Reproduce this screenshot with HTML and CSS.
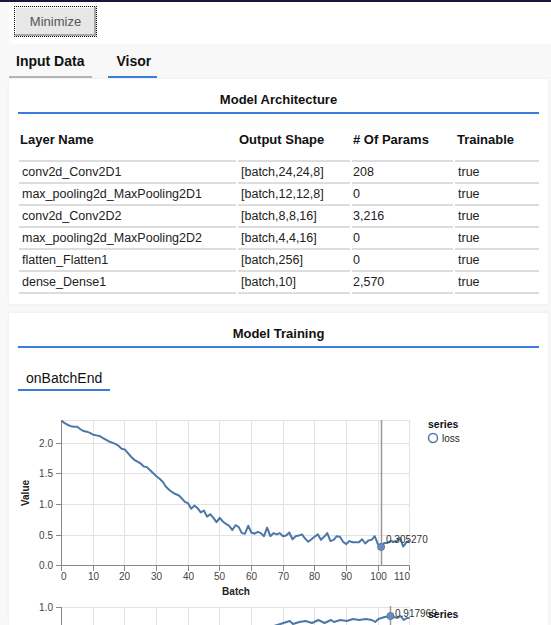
FILE: index.html
```html
<!DOCTYPE html>
<html>
<head>
<meta charset="utf-8">
<link rel="stylesheet" href="styles.css">
</head>
<body>
<div class="topbar"></div>
<div class="header"><button class="min-btn">Minimize</button></div>
<div class="tabs">
  <div class="tab tab-input">Input Data</div>
  <div class="tab tab-visor active">Visor</div>
</div>

<div class="card">
  <div class="card-title">Model Architecture</div>
  <table class="arch">
    <colgroup>
      <col class="c1"><col class="c2"><col class="c3"><col class="c4">
    </colgroup>
    <thead>
      <tr><th>Layer Name</th><th>Output Shape</th><th># Of Params</th><th class="th-train">Trainable</th></tr>
    </thead>
    <tbody>
      <tr><td>conv2d_Conv2D1</td><td>[batch,24,24,8]</td><td class="num">208</td><td>true</td></tr>
      <tr><td>max_pooling2d_MaxPooling2D1</td><td>[batch,12,12,8]</td><td class="num">0</td><td>true</td></tr>
      <tr><td>conv2d_Conv2D2</td><td>[batch,8,8,16]</td><td class="num">3,216</td><td>true</td></tr>
      <tr><td>max_pooling2d_MaxPooling2D2</td><td>[batch,4,4,16]</td><td class="num">0</td><td>true</td></tr>
      <tr><td>flatten_Flatten1</td><td>[batch,256]</td><td class="num">0</td><td>true</td></tr>
      <tr><td>dense_Dense1</td><td>[batch,10]</td><td class="num">2,570</td><td>true</td></tr>
    </tbody>
  </table>
</div>

<div class="card card-training">
  <div class="card-title">Model Training</div>
  <div class="subtabs"><div class="subtab">onBatchEnd</div></div>
  <svg class="chart" width="520" height="225" viewBox="18 400 520 225">
    <!-- chart 1 grid -->
    <g class="grid">
      <line x1="61.5" y1="420.5" x2="409.5" y2="420.5"/>
      <line x1="61.5" y1="443.5" x2="409.5" y2="443.5"/>
      <line x1="61.5" y1="473.5" x2="409.5" y2="473.5"/>
      <line x1="61.5" y1="504.5" x2="409.5" y2="504.5"/>
      <line x1="61.5" y1="535.5" x2="409.5" y2="535.5"/>
      <line x1="93.5" y1="420.5" x2="93.5" y2="565.5"/>
      <line x1="124.5" y1="420.5" x2="124.5" y2="565.5"/>
      <line x1="156.5" y1="420.5" x2="156.5" y2="565.5"/>
      <line x1="188.5" y1="420.5" x2="188.5" y2="565.5"/>
      <line x1="219.5" y1="420.5" x2="219.5" y2="565.5"/>
      <line x1="251.5" y1="420.5" x2="251.5" y2="565.5"/>
      <line x1="283.5" y1="420.5" x2="283.5" y2="565.5"/>
      <line x1="314.5" y1="420.5" x2="314.5" y2="565.5"/>
      <line x1="346.5" y1="420.5" x2="346.5" y2="565.5"/>
      <line x1="378.5" y1="420.5" x2="378.5" y2="565.5"/>
      <line x1="409.5" y1="420.5" x2="409.5" y2="565.5"/>
    </g>
    <g class="axis">
      <line x1="61.5" y1="420" x2="61.5" y2="565.5"/>
      <line x1="61.5" y1="565.5" x2="409.5" y2="565.5"/>
      <line x1="56" y1="565.5" x2="61.5" y2="565.5"/>
      <line x1="56" y1="535.5" x2="61.5" y2="535.5"/>
      <line x1="56" y1="504.5" x2="61.5" y2="504.5"/>
      <line x1="56" y1="473.5" x2="61.5" y2="473.5"/>
      <line x1="56" y1="443.5" x2="61.5" y2="443.5"/>
      <line x1="61.5" y1="565.5" x2="61.5" y2="571"/>
      <line x1="93.5" y1="565.5" x2="93.5" y2="571"/>
      <line x1="124.5" y1="565.5" x2="124.5" y2="571"/>
      <line x1="156.5" y1="565.5" x2="156.5" y2="571"/>
      <line x1="188.5" y1="565.5" x2="188.5" y2="571"/>
      <line x1="219.5" y1="565.5" x2="219.5" y2="571"/>
      <line x1="251.5" y1="565.5" x2="251.5" y2="571"/>
      <line x1="283.5" y1="565.5" x2="283.5" y2="571"/>
      <line x1="314.5" y1="565.5" x2="314.5" y2="571"/>
      <line x1="346.5" y1="565.5" x2="346.5" y2="571"/>
      <line x1="378.5" y1="565.5" x2="378.5" y2="571"/>
      <line x1="409.5" y1="565.5" x2="409.5" y2="571"/>
    </g>
    <g class="ylabels">
      <text x="53" y="569">0.0</text>
      <text x="53" y="539">0.5</text>
      <text x="53" y="508">1.0</text>
      <text x="53" y="477">1.5</text>
      <text x="53" y="447">2.0</text>
    </g>
    <g class="xlabels">
      <text x="61" y="580" class="first">0</text>
      <text x="93.5" y="580">10</text>
      <text x="124.5" y="580">20</text>
      <text x="156.5" y="580">30</text>
      <text x="188.5" y="580">40</text>
      <text x="219.5" y="580">50</text>
      <text x="251.5" y="580">60</text>
      <text x="283.5" y="580">70</text>
      <text x="314.5" y="580">80</text>
      <text x="346.5" y="580">90</text>
      <text x="378.5" y="580">100</text>
      <text x="410" y="580" class="last">110</text>
    </g>
    <text class="axis-title" x="236" y="595">Batch</text>
    <text class="axis-title" transform="translate(29,493) rotate(-90)">Value</text>

    <polyline class="series-line" transform="translate(61.5,565.5) scale(3.164,-61.1)" points="0,2.37 1,2.33 2,2.30 3,2.28 4,2.27 5,2.27 6,2.23 7,2.20 8,2.19 9,2.17 10,2.14 11,2.13 12,2.12 13,2.09 14,2.06 15,2.03 16,2.01 17,1.99 18,1.96 19,1.91 20,1.90 21,1.84 22,1.78 23,1.73 24,1.70 25,1.67 26,1.62 27,1.61 28,1.56 29,1.51 30,1.46 31,1.42 32,1.37 33,1.29 34,1.24 35,1.20 36,1.17 37,1.15 38,1.10 39,1.04 40,1.02 41,0.93 42,0.98 43,0.94 44,0.87 45,0.90 46,0.80 47,0.84 48,0.78 49,0.71 50,0.78 51,0.72 52,0.68 53,0.65 54,0.58 55,0.66 56,0.63 57,0.53 58,0.52 59,0.65 60,0.54 61,0.52 62,0.55 63,0.53 64,0.48 65,0.62 66,0.48 67,0.53 68,0.51 69,0.53 70,0.48 71,0.49 72,0.54 73,0.43 74,0.48 75,0.49 76,0.51 77,0.44 78,0.39 79,0.43 80,0.47 81,0.51 82,0.42 83,0.47 84,0.53 85,0.40 86,0.42 87,0.48 88,0.47 89,0.39 90,0.35 91,0.40 92,0.38 93,0.38 94,0.38 95,0.43 96,0.36 97,0.41 98,0.42 99,0.48 100,0.35 101,0.305 102,0.37 103,0.37 104,0.40 105,0.39 106,0.40 107,0.45 108,0.31 109,0.38 110,0.41"/>
    <line class="rule" x1="381.5" y1="420" x2="381.5" y2="566"/>
    <circle class="pt" cx="381.1" cy="546.9" r="3.5"/>
    <text class="hover" x="386" y="543">0.305270</text>

    <text class="legend-title" x="428" y="428">series</text>
    <circle class="legend-sym" cx="433" cy="438" r="4.5"/>
    <text class="legend-label" x="442" y="441.5">loss</text>

    <!-- chart 2 (partially visible) -->
    <g class="grid">
      <line x1="61.5" y1="607.5" x2="409.5" y2="607.5"/>
      <line x1="93.5" y1="607.5" x2="93.5" y2="640"/>
      <line x1="124.5" y1="607.5" x2="124.5" y2="640"/>
      <line x1="156.5" y1="607.5" x2="156.5" y2="640"/>
      <line x1="188.5" y1="607.5" x2="188.5" y2="640"/>
      <line x1="219.5" y1="607.5" x2="219.5" y2="640"/>
      <line x1="251.5" y1="607.5" x2="251.5" y2="640"/>
      <line x1="283.5" y1="607.5" x2="283.5" y2="640"/>
      <line x1="314.5" y1="607.5" x2="314.5" y2="640"/>
      <line x1="346.5" y1="607.5" x2="346.5" y2="640"/>
      <line x1="378.5" y1="607.5" x2="378.5" y2="640"/>
      <line x1="409.5" y1="607.5" x2="409.5" y2="640"/>
    </g>
    <g class="axis">
      <line x1="61.5" y1="607" x2="61.5" y2="640"/>
      <line x1="56" y1="607.5" x2="61.5" y2="607.5"/>
    </g>
    <g class="ylabels">
      <text x="53" y="611">1.0</text>
    </g>
    <polyline class="series-line" points="270.8,627 283.5,623 289.8,621 293,624 299.3,622 305.6,621 312,623 318.3,620 324.6,623 331,620 334,622 340.4,620 346.8,621 353,619 359.4,620 365.7,619 372,620 375.2,622 378.4,619 384.7,617 390.5,616 397.4,618 400.6,616 403.7,620 407,618 409.5,618"/>
    <line class="rule" x1="390.5" y1="606" x2="390.5" y2="640"/>
    <circle class="pt" cx="390.5" cy="616" r="3.5"/>
    <text class="hover" x="395" y="617">0.917969</text>
    <text class="legend-title" x="428" y="618">series</text>
  </svg>
</div>
</body>
</html>
```

FILE: styles.css
```css
html, body {
  margin: 0;
  padding: 0;
  overflow: hidden;
}
body {
  background: #f8f8f8;
  font-family: "Liberation Sans", Arial, sans-serif;
  color: #111;
  width: 551px;
}
.topbar {
  height: 2px;
  background: #1d1538;
}
.header {
  margin-left: 9px;
  height: 42px;
  box-sizing: border-box;
  padding: 4px 5px;
  background: #fff;
  border-bottom-left-radius: 5px;
}
.min-btn {
  display: block;
  width: 83px;
  height: 31px;
  margin: 0;
  padding: 0;
  border: 1px dotted #111;
  background: #e7e7e7;
  box-shadow: inset -2px -2px 0 #a8a8a8, inset 1px 1px 0 #fafafa;
  font-family: "Liberation Sans", Arial, sans-serif;
  font-size: 13px;
  color: #555;
}
.tabs {
  display: flex;
  gap: 16px;
  padding-left: 9px;
  margin-bottom: 1px;
}
.tab {
  font-size: 14px;
  font-weight: bold;
  line-height: 17px;
  color: #111;
  padding: 9px 8px 6px 7px;
  border-bottom: 2px solid #b5b5b5;
}
.tab-visor {
  padding-left: 8px;
  padding-right: 6px;
}
.tab.active {
  border-bottom-color: #3b7dd8;
}
.card {
  background: #fff;
  margin: 0 3px 9px 9px;
  padding: 0 9px 10px;
  box-shadow: 0 0 3px rgba(0, 0, 0, 0.07);
}
.card-title {
  text-align: center;
  font-size: 13px;
  font-weight: bold;
  line-height: 15px;
  padding: 13px 0 5px;
  border-bottom: 2px solid #3b7dd8;
}
.arch {
  table-layout: fixed;
  border-collapse: separate;
  border-spacing: 2px 0;
  width: 524px;
  margin: 8px 0 0 -1px;
}
.c1 { width: 217px; }
.c2 { width: 112px; }
.c3 { width: 101px; }
.c4 { width: 84px; }
.arch th {
  text-align: left;
  font-size: 13px;
  font-weight: bold;
  line-height: 15px;
  padding: 10px 0 13px 1px;
  border-bottom: 2px solid #ddd;
  white-space: nowrap;
}
.arch th.th-train {
  padding-left: 2px;
}
.arch td {
  font-size: 12.5px;
  line-height: 14px;
  padding: 3px 3px 3px 3px;
  border-bottom: 2px solid #ddd;
  color: #222;
  white-space: nowrap;
}
.arch td.num {
  padding-left: 1px;
}
.card-training {
  padding-bottom: 0;
}
.subtabs {
  display: flex;
  margin-top: 17px;
}
.subtab {
  font-size: 14px;
  line-height: 16px;
  padding: 5px 8px 3px 8px;
  border-bottom: 2px solid #3b7dd8;
  color: #111;
}
.chart {
  display: block;
  margin-top: 9px;
  font-family: "Liberation Sans", Arial, sans-serif;
}
.grid line {
  stroke: #e2e2e2;
  stroke-width: 1;
}
.axis line {
  stroke: #888;
  stroke-width: 1;
}
.ylabels text {
  font-size: 10px;
  fill: #444;
  text-anchor: end;
}
.xlabels text {
  font-size: 10px;
  fill: #444;
  text-anchor: middle;
}
.xlabels text.first {
  text-anchor: start;
}
.xlabels text.last {
  text-anchor: end;
}
.axis-title {
  font-size: 10px;
  font-weight: bold;
  fill: #222;
  text-anchor: middle;
}
.series-line {
  fill: none;
  stroke: #4c78a8;
  stroke-width: 2;
  stroke-linejoin: round;
  vector-effect: non-scaling-stroke;
}
.rule {
  stroke: #999;
  stroke-width: 1.5;
}
.pt {
  fill: #6a8fbb;
  stroke: #4c78a8;
  stroke-width: 1;
}
.hover {
  font-size: 10px;
  fill: #333;
}
.legend-title {
  font-size: 10.5px;
  font-weight: bold;
  fill: #111;
}
.legend-sym {
  fill: none;
  stroke: #4c78a8;
  stroke-width: 1.5;
}
.legend-label {
  font-size: 10px;
  fill: #222;
}
```
